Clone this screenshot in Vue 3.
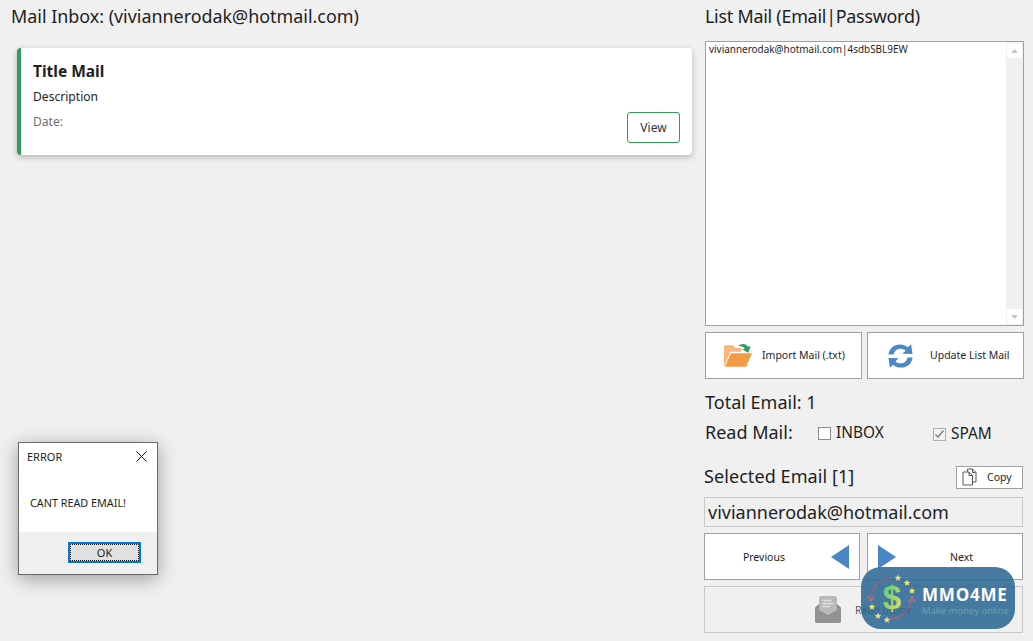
<template>
  <div class="page">
    <main class="left">
      <h1 class="heading">Mail Inbox: (viviannerodak@hotmail.com)</h1>
      <article class="card">
        <h2 class="card-title">Title Mail</h2>
        <p class="card-desc">Description</p>
        <p class="card-date">Date:</p>
        <button class="view">View</button>
      </article>
    </main>

    <aside class="right">
      <h1 class="heading list-head">List Mail (Email|Password)</h1>
      <div class="textarea">
        <span class="ta-text">viviannerodak@hotmail.com|4sdbSBL9EW</span>
        <div class="scroll">
          <span class="sbtn"><svg width="7" height="4" viewBox="0 0 7 4"><path d="M3.5 0L7 4H0z" fill="#c4c4c4"/></svg></span>
          <span class="sbtn"><svg width="7" height="4" viewBox="0 0 7 4"><path d="M3.5 4L7 0H0z" fill="#c4c4c4"/></svg></span>
        </div>
      </div>

      <div class="btn-row top-row">
        <button class="btn">
          <svg class="ico-folder" width="30" height="25" viewBox="0 0 32 26">
            <path d="M1 25V3.500C1 2.600 1.600 2 2.500 2h8l3 3h6v4H8L1 25z" fill="#f6b77c"/>
            <path d="M8.500 10.500H31L24.500 25H2z" fill="#f39a45"/>
            <path d="M16 3C19.500 -.2 24.500 0 26.500 3.500L29.500 3 27 10 20.500 6.500 23.300 5.600C21.500 3.600 19 2.900 16 3z" fill="#2f9e5f"/>
          </svg>
          <span class="lbl lbl-import">Import Mail (.txt)</span>
        </button>
        <button class="btn">
          <svg class="ico-sync" width="25" height="26" viewBox="0 0 26 26">
            <path d="M.5 11.500C1.100 5 6.400 1 12.600 1c3.300 0 6 1.100 8.100 3L24 .8 25.500 11 15 10.600l3.300-3.200c-1.500-1.300-3.400-2-5.600-2-3.600 0-6.200 2.300-6.900 6.100z" fill="#4a88c7"/>
            <path d="M25.500 14.500C24.900 21 19.600 25 13.400 25c-3.300 0-6-1.100-8.100-3L2 25.200.5 15l10.500.4-3.300 3.200c1.500 1.300 3.400 2 5.600 2 3.600 0 6.200-2.300 6.900-6.100z" fill="#4a88c7"/>
          </svg>
          <span class="lbl lbl-update">Update List Mail</span>
        </button>
      </div>

      <div class="total">Total Email: 1</div>
      <div class="read-row">
        <span class="read-label">Read Mail:</span>
        <label class="check inbox-check"><span class="box"></span>INBOX</label>
        <label class="check spam-check">
          <span class="box checked"><svg width="11" height="10" viewBox="0 0 11 10"><path d="M1.500 5.500L4 8l5.500-6.500" fill="none" stroke="#777" stroke-width="1.200"/></svg></span>SPAM
        </label>
      </div>

      <div class="selected-row">
        <span class="selected">Selected Email [1]</span>
        <button class="copy">
          <svg width="16" height="18" viewBox="0 0 16 18">
            <path d="M5.500 3.500V1h5l3.500 3.500V14H11" fill="#fff" stroke="#555" stroke-width="1"/>
            <path d="M1 4h6l3.500 3.500V17H1z" fill="#fff" stroke="#555" stroke-width="1"/>
            <path d="M7 4v3.500h3.500M10.500 1v3.500h3" fill="none" stroke="#555" stroke-width="1"/>
          </svg>
          <span>Copy</span>
        </button>
      </div>

      <div class="email-input">viviannerodak@hotmail.com</div>

      <div class="btn-row nav-row">
        <button class="btn nav prev">
          <span class="nav-lbl">Previous</span>
          <svg width="18" height="24" viewBox="0 0 18 24"><path d="M18 0V24L0 12z" fill="#4a86c5"/></svg>
        </button>
        <button class="btn nav next">
          <svg width="18" height="24" viewBox="0 0 18 24"><path d="M0 0V24L18 12z" fill="#4a86c5"/></svg>
          <span class="nav-lbl">Next</span>
        </button>
      </div>

      <button class="btn read-inbox">
        <svg width="26" height="27" viewBox="0 0 26 27">
          <path d="M0 11.500L4 8v6L0 11.500zM26 11.500L22 8v6l4-2.500z" fill="#8a8a8a"/>
          <path d="M4 2c0-1 .8-2 2-2h14c1.200 0 2 1 2 2v12l-9 5-9-5z" fill="#b9b9b9"/>
          <path d="M7.500 4.500h9M7.500 7.500h11M7.500 10.500h8" stroke="#e2e2e2" stroke-width="1.500"/>
          <path d="M0 11.500L13 19l13-7.500V25c0 1-.8 2-2 2H2c-1.200 0-2-1-2-2z" fill="#929292"/>
        </svg>
        <span class="lbl-read">Read Inbox</span>
      </button>
    </aside>

    <section class="dialog">
      <header class="dlg-head">
        <span>ERROR</span>
        <svg width="11" height="11" viewBox="0 0 11 11"><path d="M.5.5l10 10M10.500.5l-10 10" stroke="#111" stroke-width="1"/></svg>
      </header>
      <p class="dlg-msg">CANT READ EMAIL!</p>
      <footer class="dlg-foot"><button class="ok"><span class="ok-inner">OK</span></button></footer>
    </section>

    <div class="badge">
      <svg class="badge-logo" width="50" height="50" viewBox="0 0 50 50">
        <defs>
          <linearGradient id="dollarFill" x1="0" y1="0" x2="1" y2="1">
            <stop offset="0" stop-color="#3fce8c"/>
            <stop offset="1" stop-color="#f1e04f"/>
          </linearGradient>
        </defs>
        <path d="M24 5C13 6 6 14 5 27" fill="none" stroke="#a8607a" stroke-width="1.200"/>
        <path d="M2 23l3 5 3-5" fill="none" stroke="#d9607a" stroke-width="1.400"/>
        <path d="M24 46C36 45 45 36 46 25" fill="none" stroke="#a8607a" stroke-width="1.200"/>
        <path d="M43 29l3-5 3 5" fill="none" stroke="#d9607a" stroke-width="1.400"/>
        <g fill="#f5e56f">
          <polygon v-for="s in stars" :key="s" :points="s" />
        </g>
        <text x="26" y="36" text-anchor="middle" class="dollar" fill="url(#dollarFill)">$</text>
      </svg>
      <div class="badge-text">
        <div class="badge-name">MMO4ME</div>
        <div class="badge-sub">Make money online</div>
      </div>
    </div>
  </div>
</template>

<script setup>
const centers = [[32, 5], [41, 10], [46, 18], [6, 34], [12, 43], [21, 47]]
const stars = centers.map(([cx, cy]) => {
  const pts = []
  for (let i = 0; i < 10; i++) {
    const r = i % 2 === 0 ? 3.4 : 1.6
    const a = -Math.PI / 2 + (i * Math.PI) / 5
    pts.push(`${(cx + r * Math.cos(a)).toFixed(1)},${(cy + r * Math.sin(a)).toFixed(1)}`)
  }
  return pts.join(' ')
})
</script>

<style>
html, body { margin: 0; background: #f0f0f0; }
</style>

<style scoped>
.page {
  position: relative;
  width: 1033px;
  height: 641px;
  overflow: hidden;
  display: flex;
  background: #f0f0f0;
  color: #1e1e1e;
  font-family: "Noto Sans", "DejaVu Sans", sans-serif;
}
button { font-family: inherit; color: inherit; padding: 0; cursor: default; }
.left { width: 705px; flex: none; padding: 4px 0 0 11px; box-sizing: border-box; }
.right { width: 320px; flex: none; display: flex; flex-direction: column; padding-top: 4px; box-sizing: border-box; }
.heading { margin: 0; font-size: 17.900px; font-weight: 400; line-height: 24px; white-space: nowrap; }
.list-head { letter-spacing: -.25px; }
.card {
  position: relative;
  margin: 20px 0 0 6px;
  width: 675px;
  height: 107px;
  box-sizing: border-box;
  padding: 13px 0 0 12px;
  background: #fff;
  border-left: 4px solid #349b59;
  border-radius: 4px;
  box-shadow: 0 2px 6px rgba(0, 0, 0, .25);
}
.card-title { margin: 0; font-size: 15.500px; line-height: 21px; font-weight: 700; color: #222; }
.card-desc { margin: 5px 0 0; font-size: 12.100px; line-height: 20px; color: #222; }
.card-date { margin: 5px 0 0; font-size: 12.100px; line-height: 20px; color: #6f6f6f; }
.view {
  position: absolute; right: 12px; bottom: 12px;
  width: 53px; height: 31px; background: #fff;
  border: 1px solid #349b59; border-radius: 3px;
  font-size: 12px; color: #333;
}
.textarea {
  position: relative;
  margin-top: 13px;
  width: 319px; height: 285px; box-sizing: border-box;
  background: #fff; border: 1px solid #a0a0a0;
  padding: 1px 0 0 3px;
  font-size: 9.950px; line-height: 13px;
}
.ta-text { white-space: nowrap; }
.scroll {
  position: absolute; top: 0; right: 0; bottom: 0; width: 17px;
  background: #f0f0f0; display: flex; flex-direction: column; justify-content: space-between;
  align-items: center; padding: 1px 0; box-sizing: border-box;
}
.sbtn { width: 15px; height: 15px; background: #fff; display: flex; align-items: center; justify-content: center; }
.btn-row { display: flex; justify-content: space-between; width: 319px; }
.top-row { margin-top: 6px; }
.btn {
  width: 157px; height: 47px; box-sizing: border-box;
  background: #fff; border: 1px solid #a0a0a0;
  display: flex; align-items: center; font-size: 10.500px;
}
.lbl { margin-bottom: 1px; }
.ico-folder { margin-left: 17px; }
.lbl-import { margin-left: 9px; }
.ico-sync { margin-left: 20px; }
.lbl-update { margin-left: 17px; }
.total { margin-top: 11px; font-size: 18px; line-height: 24px; }
.read-row { margin-top: 6px; height: 24px; display: flex; align-items: center; font-size: 15.400px; }
.read-label { font-size: 18px; width: 113px; flex: none; }
.check { display: flex; align-items: center; line-height: 20px; }
.box { width: 13px; height: 13px; box-sizing: border-box; border: 1px solid #8a8a8a; background: #fff; margin-right: 5px; display: flex; align-items: center; justify-content: center; }
.box.checked { background: #f2f2f2; border-color: #b0b0b0; }
.inbox-check { width: 115px; flex: none; margin-top: 2px; }
.spam-check { margin-top: 4px; }
.selected-row { margin-top: 20px; margin-left: -1px; width: 319px; display: flex; justify-content: space-between; align-items: center; height: 24px; }
.selected { font-size: 18px; line-height: 24px; letter-spacing: .08px; }
.copy {
  margin-top: 2px;
  width: 67px; height: 23px; box-sizing: border-box;
  background: #fff; border: 1px solid #a0a0a0;
  display: flex; align-items: center; padding-left: 5px; gap: 9px; font-size: 10.500px;
}
.email-input {
  margin: 9px 0 0 -1px; width: 319px; height: 30px; box-sizing: border-box;
  border: 1px solid #c8c8c8; background: #f0f0f0;
  padding-left: 3px; font-size: 18px; line-height: 28px; color: #222;
}
.nav-row { margin: 6px 0 0 -1px; }
.nav { width: 156px; }
.prev { justify-content: flex-end; padding-right: 10px; }
.prev .nav-lbl { margin-right: 46px; }
.next { padding-left: 10px; }
.next .nav-lbl { margin-left: 54px; }
.read-inbox {
  margin: 6px 0 0 -1px; width: 319px; background: #f0f0f0; border-color: #c8c8c8;
  color: #5a5a5a; padding-left: 110px;
}
.lbl-read { margin-left: 14px; font-size: 10.500px; }

.dialog {
  position: absolute; left: 18px; top: 442px; width: 140px; height: 133px;
  box-sizing: border-box; background: #fff; border: 1px solid #6a6a6a;
  box-shadow: 0 4px 18px rgba(0, 0, 0, .35);
  display: flex; flex-direction: column;
}
.dlg-head { display: flex; justify-content: space-between; align-items: center; padding: 6px 10px 0 8px; font-size: 11px; line-height: 15px; }
.dlg-msg { margin: 31px 0 0 11px; font-size: 10.800px; line-height: 15px; flex: 1; }
.dlg-foot { height: 42px; background: #f0f0f0; position: relative; }
.ok {
  position: absolute; left: 49px; top: 10px; width: 73px; height: 21px; box-sizing: border-box;
  background: #e1e1e1; border: 2px solid #0078d7; font-size: 11px; display: block;
}
.ok-inner { display: block; height: 100%; line-height: 15px; border: 1px dotted #111; box-sizing: border-box; }

.badge {
  position: absolute; left: 861px; top: 567px; width: 154px; height: 62px;
  border-radius: 20px; background: rgba(45, 103, 147, .87);
  display: flex; align-items: center;
}
.badge-logo { margin-left: 5px; flex: none; }
.dollar { font-family: "Liberation Sans", sans-serif; font-weight: 700; font-size: 33px; }
.badge-text { margin: 5px 0 0 6px; }
.badge-name { font-family: "Open Sans", sans-serif; font-size: 17px; line-height: 19px; font-weight: 700; color: #fff; letter-spacing: .8px; white-space: nowrap; }
.badge-sub { font-family: "Open Sans", sans-serif; font-size: 9.500px; line-height: 13px; color: #68a5ac; white-space: nowrap; }
</style>
